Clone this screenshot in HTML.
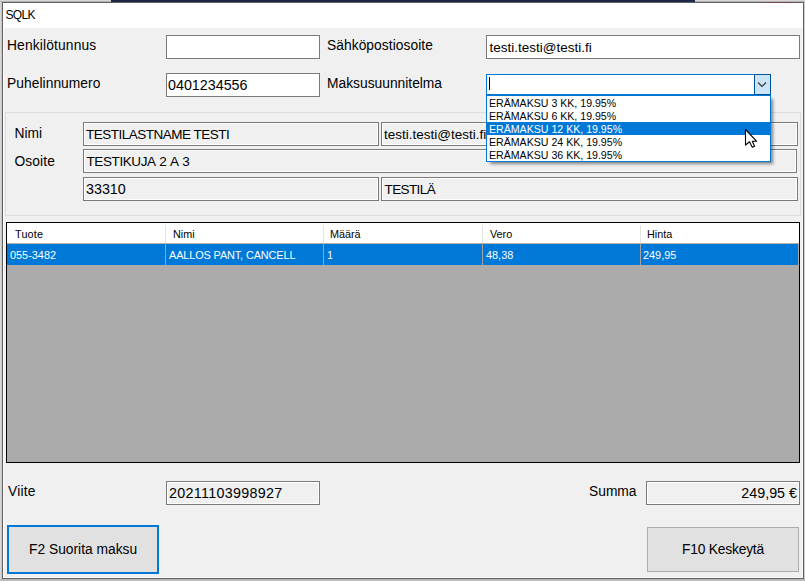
<!DOCTYPE html>
<html><head><meta charset="utf-8"><style>
html,body{margin:0;padding:0;width:805px;height:581px;overflow:hidden;background:#c9c9c9}
.a{position:absolute}
.t{position:absolute;white-space:nowrap;font-family:"Liberation Sans", sans-serif}
</style></head><body>
<div class="a" style="left:0px;top:0px;width:805px;height:581px;background:#c9c9c9"></div>
<div class="a" style="left:0px;top:0px;width:1px;height:581px;background:#d8d8d8"></div>
<div class="a" style="left:1px;top:0px;width:1px;height:581px;background:#c8c8c8"></div>
<div class="a" style="left:0px;top:0px;width:805px;height:1px;background:#d6d6d6"></div>
<div class="a" style="left:0px;top:1px;width:805px;height:1px;background:#b4b4b4"></div>
<div class="a" style="left:111px;top:0px;width:584px;height:2px;background:#1c2846"></div>
<div class="a" style="left:110px;top:579px;width:1px;height:2px;background:#787878"></div>
<div class="a" style="left:695px;top:579px;width:1px;height:2px;background:#787878"></div>
<div class="a" style="left:804px;top:0px;width:1px;height:581px;background:#d0d0d0"></div>
<div class="a" style="left:0px;top:579px;width:805px;height:2px;background:#bbbbbb"></div>
<div class="a" style="left:2px;top:2px;width:802px;height:577px;background:#f0f0f0;box-sizing:border-box;border:1px solid #606060"></div>
<div class="a" style="left:764px;top:2px;width:32px;height:1px;background:#7a4a4e"></div>
<div class="a" style="left:3px;top:3px;width:800px;height:25px;background:#ffffff"></div>
<div class="t" style="left:5.5px;top:9px;font-size:12px;line-height:12px;color:#000;letter-spacing:-0.7px;">SQLK</div>
<div class="a" style="left:3px;top:28px;width:1px;height:550px;background:#fcfcfc"></div>
<div class="a" style="left:802px;top:28px;width:1px;height:550px;background:#f6f6f6"></div>
<div class="a" style="left:3px;top:577px;width:800px;height:1px;background:#fafafa"></div>
<div class="t" style="left:7px;top:39px;font-size:13.8px;line-height:13.8px;color:#000;letter-spacing:0.15px;">Henkilötunnus</div>
<div class="t" style="left:7px;top:77px;font-size:13.8px;line-height:13.8px;color:#000;letter-spacing:0.05px;">Puhelinnumero</div>
<div class="t" style="left:327px;top:39px;font-size:13.8px;line-height:13.8px;color:#000;letter-spacing:0.05px;">Sähköpostiosoite</div>
<div class="t" style="left:327px;top:77px;font-size:13.8px;line-height:13.8px;color:#000;">Maksusuunnitelma</div>
<div class="a" style="left:166px;top:35px;width:154px;height:24px;background:#fff;box-sizing:border-box;border:1px solid #7a7a7a;"></div>
<div class="a" style="left:166px;top:73px;width:154px;height:24px;background:#fff;box-sizing:border-box;border:1px solid #7a7a7a;"></div>
<div class="t" style="left:168px;top:78px;font-size:14.3px;line-height:14.3px;color:#000;">0401234556</div>
<div class="a" style="left:486px;top:35px;width:314px;height:24px;background:#fff;box-sizing:border-box;border:1px solid #7a7a7a;"></div>
<div class="t" style="left:489.5px;top:41px;font-size:13.5px;line-height:13.5px;color:#000;">testi.testi@testi.fi</div>
<div class="a" style="left:5px;top:112px;width:796px;height:104px;box-sizing:border-box;border:1px solid #dcdcdc"></div>
<div class="t" style="left:14.5px;top:127px;font-size:13.8px;line-height:13.8px;color:#000;">Nimi</div>
<div class="t" style="left:14.5px;top:155px;font-size:13.8px;line-height:13.8px;color:#000;letter-spacing:0.1px;">Osoite</div>
<div class="a" style="left:83px;top:122px;width:296px;height:24px;background:#f0f0f0;box-sizing:border-box;border:1px solid #7a7a7a;box-shadow:inset 0 0 0 1px #ffffff;"></div>
<div class="a" style="left:381px;top:122px;width:417px;height:24px;background:#f0f0f0;box-sizing:border-box;border:1px solid #7a7a7a;box-shadow:inset 0 0 0 1px #ffffff;"></div>
<div class="a" style="left:83px;top:149px;width:714px;height:24px;background:#f0f0f0;box-sizing:border-box;border:1px solid #7a7a7a;box-shadow:inset 0 0 0 1px #ffffff;"></div>
<div class="a" style="left:83px;top:177px;width:296px;height:24px;background:#f0f0f0;box-sizing:border-box;border:1px solid #7a7a7a;box-shadow:inset 0 0 0 1px #ffffff;"></div>
<div class="a" style="left:381px;top:177px;width:417px;height:24px;background:#f0f0f0;box-sizing:border-box;border:1px solid #7a7a7a;box-shadow:inset 0 0 0 1px #ffffff;"></div>
<div class="t" style="left:86px;top:128px;font-size:13.5px;line-height:13.5px;color:#000;letter-spacing:-0.5px;">TESTILASTNAME TESTI</div>
<div class="t" style="left:384px;top:128px;font-size:13.5px;line-height:13.5px;color:#000;">testi.testi@testi.fi</div>
<div class="t" style="left:86.5px;top:155px;font-size:13.5px;line-height:13.5px;color:#000;letter-spacing:-0.4px;word-spacing:1px;">TESTIKUJA 2 A 3</div>
<div class="t" style="left:86px;top:182px;font-size:14.3px;line-height:14.3px;color:#000;">33310</div>
<div class="t" style="left:384.5px;top:183px;font-size:13.5px;line-height:13.5px;color:#000;letter-spacing:-0.6px;">TESTILÄ</div>
<div class="a" style="left:6px;top:222px;width:794px;height:241px;background:#ababab;box-sizing:border-box;border:1px solid #000"></div>
<div class="a" style="left:7px;top:223px;width:792px;height:20px;background:#fff"></div>
<div class="a" style="left:7px;top:243px;width:792px;height:1px;background:#b8b0a4"></div>
<div class="a" style="left:7px;top:244px;width:791px;height:21px;background:#0078d7"></div>
<div class="a" style="left:165px;top:225px;width:1px;height:18px;background:#e3e3e3"></div>
<div class="a" style="left:165px;top:244px;width:1px;height:21px;background:#a3a3a3"></div>
<div class="a" style="left:323px;top:225px;width:1px;height:18px;background:#e3e3e3"></div>
<div class="a" style="left:323px;top:244px;width:1px;height:21px;background:#a3a3a3"></div>
<div class="a" style="left:482px;top:225px;width:1px;height:18px;background:#e3e3e3"></div>
<div class="a" style="left:482px;top:244px;width:1px;height:21px;background:#a3a3a3"></div>
<div class="a" style="left:640px;top:225px;width:1px;height:18px;background:#e3e3e3"></div>
<div class="a" style="left:640px;top:244px;width:1px;height:21px;background:#a3a3a3"></div>
<div class="t" style="left:15px;top:229px;font-size:10.8px;line-height:10.8px;color:#000;letter-spacing:0.2px;">Tuote</div>
<div class="t" style="left:173px;top:229px;font-size:10.8px;line-height:10.8px;color:#000;">Nimi</div>
<div class="t" style="left:330px;top:229px;font-size:10.8px;line-height:10.8px;color:#000;">Määrä</div>
<div class="t" style="left:490px;top:229px;font-size:10.8px;line-height:10.8px;color:#000;">Vero</div>
<div class="t" style="left:647px;top:229px;font-size:10.8px;line-height:10.8px;color:#000;">Hinta</div>
<div class="t" style="left:10px;top:250px;font-size:10.9px;line-height:10.9px;color:#fff;">055-3482</div>
<div class="t" style="left:169px;top:250px;font-size:10.9px;line-height:10.9px;color:#fff;letter-spacing:-0.12px;">AALLOS PANT, CANCELL</div>
<div class="t" style="left:327px;top:250px;font-size:10.9px;line-height:10.9px;color:#fff;">1</div>
<div class="t" style="left:486px;top:250px;font-size:10.9px;line-height:10.9px;color:#fff;">48,38</div>
<div class="t" style="left:643px;top:250px;font-size:10.9px;line-height:10.9px;color:#fff;">249,95</div>
<div class="t" style="left:8px;top:485px;font-size:13.8px;line-height:13.8px;color:#000;letter-spacing:0.2px;">Viite</div>
<div class="a" style="left:166px;top:481px;width:154px;height:24px;background:#f0f0f0;box-sizing:border-box;border:1px solid #7a7a7a;box-shadow:inset 0 0 0 1px #ffffff;"></div>
<div class="t" style="left:169px;top:486px;font-size:14.3px;line-height:14.3px;color:#000;letter-spacing:0.3px;">20211103998927</div>
<div class="t" style="left:589px;top:485px;font-size:13.8px;line-height:13.8px;color:#000;">Summa</div>
<div class="a" style="left:646px;top:481px;width:154px;height:24px;background:#f0f0f0;box-sizing:border-box;border:1px solid #7a7a7a;box-shadow:inset 0 0 0 1px #ffffff;"></div>
<div class="t" style="right:8px;top:486px;font-size:14.3px;line-height:14.3px">249,95 €</div>
<div class="a" style="left:7px;top:525px;width:152px;height:49px;background:#e1e1e1;box-sizing:border-box;border:2px solid #0078d7"></div>
<div class="t" style="left:29px;top:543px;font-size:13.8px;line-height:13.8px;color:#000;">F2 Suorita maksu</div>
<div class="a" style="left:647px;top:527px;width:152px;height:45px;background:#e1e1e1;box-sizing:border-box;border:1px solid #adadad"></div>
<div class="t" style="left:682px;top:543px;font-size:13.8px;line-height:13.8px;color:#000;letter-spacing:-0.2px;">F10 Keskeytä</div>
<div class="a" style="left:486px;top:74px;width:285px;height:21px;background:#fff;box-sizing:border-box;border:1px solid #0078d7"></div>
<div class="a" style="left:486px;top:94px;width:285px;height:1px;background:#0078d7"></div>
<div class="a" style="left:489px;top:77px;width:1px;height:13px;background:#000"></div>
<div class="a" style="left:754px;top:74px;width:17px;height:21px;background:#cce4f7;box-sizing:border-box;border:1px solid #005499"></div>
<svg class="a" style="left:754px;top:74px" width="17" height="21"><path d="M4 8.5 L8 12.5 L12 8.5" fill="none" stroke="#333333" stroke-width="1.15"/></svg>
<div class="a" style="left:486px;top:95px;width:285px;height:67px;background:#fff;box-sizing:border-box;border:1px solid #0078d7;box-shadow:3px 3px 3px -1px rgba(0,0,0,0.45)"></div>
<div class="a" style="left:487px;top:122px;width:283px;height:13px;background:#0078d7"></div>
<div class="t" style="left:489px;top:98px;font-size:10.6px;line-height:10.6px;color:#000;">ERÄMAKSU 3 KK, 19.95%</div>
<div class="t" style="left:489px;top:111px;font-size:10.6px;line-height:10.6px;color:#000;">ERÄMAKSU 6 KK, 19.95%</div>
<div class="t" style="left:489px;top:124px;font-size:10.6px;line-height:10.6px;color:#fff;">ERÄMAKSU 12 KK, 19.95%</div>
<div class="t" style="left:489px;top:137px;font-size:10.6px;line-height:10.6px;color:#000;">ERÄMAKSU 24 KK, 19.95%</div>
<div class="t" style="left:489px;top:150px;font-size:10.6px;line-height:10.6px;color:#000;">ERÄMAKSU 36 KK, 19.95%</div>
<svg class="a" style="left:744px;top:128px" width="16" height="24"><path d="M1.5 1.5 L1.5 17 L5.5 13.8 L8.3 19.3 L10.6 18.3 L8.3 13.3 L12.7 13.3 Z" fill="#fff" stroke="#000" stroke-width="1.1" stroke-linejoin="round"/></svg>
</body></html>
